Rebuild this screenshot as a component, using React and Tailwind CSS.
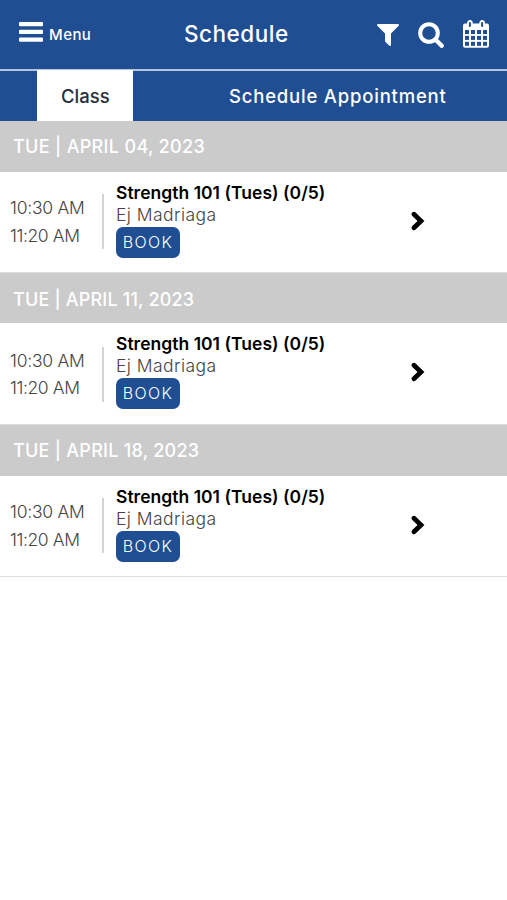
const sessions = [
  { date: 'TUE | APRIL 04, 2023', head: 'h-[51px] leading-[52px] tracking-[0.32px]', row: 'h-[101px]', rule: 'mt-[22px]', info: 'pt-[10px]', times: 'pt-[22px]', gap: 'leading-[28px]', arrow: 'pt-[39px]' },
  { date: 'TUE | APRIL 11, 2023', head: 'h-[50px] leading-[53px] tracking-[0.18px]', row: 'h-[102px]', rule: 'mt-[24px]', info: 'pt-[10.4px]', times: 'pt-[23.5px]', gap: 'leading-[27px]', arrow: 'pt-[39px]' },
  { date: 'TUE | APRIL 18, 2023', head: 'h-[51px] leading-[52px] tracking-[0.26px]', row: 'h-[101px]', rule: 'mt-[22px]', info: 'pt-[10px]', times: 'pt-[22px]', gap: 'leading-[28px]', arrow: 'pt-[39px]' },
]

function MenuIcon() {
  return (
    <svg width="24" height="21" viewBox="0 0 24 21" fill="currentColor">
      <rect x="0" y="0" width="24" height="4.3" rx="1" />
      <rect x="0" y="7.8" width="24" height="4.3" rx="1" />
      <rect x="0" y="15.5" width="24" height="4.3" rx="1" />
    </svg>
  )
}

function FilterIcon() {
  return (
    <svg width="22" height="22" viewBox="0 0 1408 1408" fill="currentColor">
      <path d="M1403 39q17 41-14 70l-493 493v742q0 42-39 59-13 5-25 5-27 0-45-19l-256-256q-19-19-19-45v-486l-493-493q-31-29-14-70 17-39 59-39h1280q42 0 59 39z" />
    </svg>
  )
}

function SearchIcon() {
  return (
    <svg width="26" height="26" viewBox="0 0 26 26" fill="none" stroke="currentColor">
      <circle cx="11" cy="11" r="8.8" strokeWidth="4" />
      <path d="M17.7 17.7L23.7 23.7" strokeWidth="4.4" strokeLinecap="round" />
    </svg>
  )
}

function CalendarIcon() {
  return (
    <svg width="26" height="28" viewBox="0 0 26 28">
      <rect x="0" y="3.6" width="26" height="24.2" rx="2" fill="#fff" />
      <g fill="#1f4e92">
        {[10, 15.9, 21.8].map(y => (
          [2, 8, 14, 20].map(x => (
            <rect key={`${x}-${y}`} x={x} y={y} width="4" height="4" />
          ))
        ))}
      </g>
      <rect x="5" y="1" width="3.8" height="7" rx="1.9" fill="#1f4e92" stroke="#fff" strokeWidth="1.8" />
      <rect x="17.2" y="1" width="3.8" height="7" rx="1.9" fill="#1f4e92" stroke="#fff" strokeWidth="1.8" />
    </svg>
  )
}

function Chevron() {
  return (
    <svg width="14" height="20" viewBox="0 0 14 20" fill="none" stroke="#000" strokeWidth="4.8" strokeLinecap="round">
      <path d="M3 3.2L10 10L3 16.8" />
    </svg>
  )
}

function Session({ session }) {
  return (
    <section>
      <h2 className={`${session.head} pl-[13px] bg-[#cbcbcb] text-white text-[18px] font-medium whitespace-nowrap`}>{session.date}</h2>
      <div className={`${session.row} flex border-b border-[#dedede] bg-white`}>
        <div className={`${session.times} w-[102px] shrink-0 pl-[10px]`}>
          <div className={`${session.gap} text-[17.5px] font-light text-[#444] whitespace-nowrap`}>
            <p className="tracking-[-0.25px]">10:30 AM</p>
            <p className="tracking-[-0.4px]">11:20 AM</p>
          </div>
        </div>
        <div className={`${session.rule} h-[55px] w-[2px] shrink-0 bg-[#d4d4d4]`} />
        <div className={`${session.info} w-[307px] shrink-0 pl-3`}>
          <h3 className="leading-[22px] text-[17.5px] font-semibold text-black whitespace-nowrap tracking-[0.02px]">Strength 101 (Tues) (0/5)</h3>
          <p className="leading-[22px] text-[17.5px] font-light text-[#444] whitespace-nowrap tracking-[0.45px]">Ej Madriaga</p>
          <button className="mt-px block h-[30.5px] w-[64px] rounded-[7px] bg-[#1f4e92] text-[16px] leading-[31px] font-light text-white tracking-[1.4px]">BOOK</button>
        </div>
        <div className={session.arrow}>
          <Chevron />
        </div>
      </div>
    </section>
  )
}

export default function App() {
  return (
    <div className="h-[900px] w-[507px] overflow-hidden bg-white font-['Inter',sans-serif]">
      <header className="flex h-[71px] border-b-2 border-[#b3c5df] bg-[#1f4e92] text-white">
        <div className="flex w-[184px] shrink-0 pl-[19px] pt-[22px]">
          <MenuIcon />
          <span className="ml-[6px] mt-[3px] text-[15px] leading-5 font-medium tracking-[0.45px]">Menu</span>
        </div>
        <h1 className="w-[193px] shrink-0 pt-[19px] text-[22.5px] leading-[29px] font-medium tracking-[0.5px]">Schedule</h1>
        <div className="pt-[24px]"><FilterIcon /></div>
        <div className="ml-[19px] pt-[22px]"><SearchIcon /></div>
        <div className="ml-[19px] pt-[20px]"><CalendarIcon /></div>
      </header>
      <nav className="flex h-[50px] bg-[#1f4e92] text-[18.5px] font-medium">
        <div className="-mt-px ml-[37px] h-[51px] w-[96px] bg-white pl-6 leading-[53px] text-[#28303d]">Class</div>
        <div className="ml-24 leading-[51px] tracking-[0.8px] text-white whitespace-nowrap">Schedule Appointment</div>
      </nav>
      <main>
        {sessions.map(session => <Session key={session.date} session={session} />)}
      </main>
    </div>
  )
}
